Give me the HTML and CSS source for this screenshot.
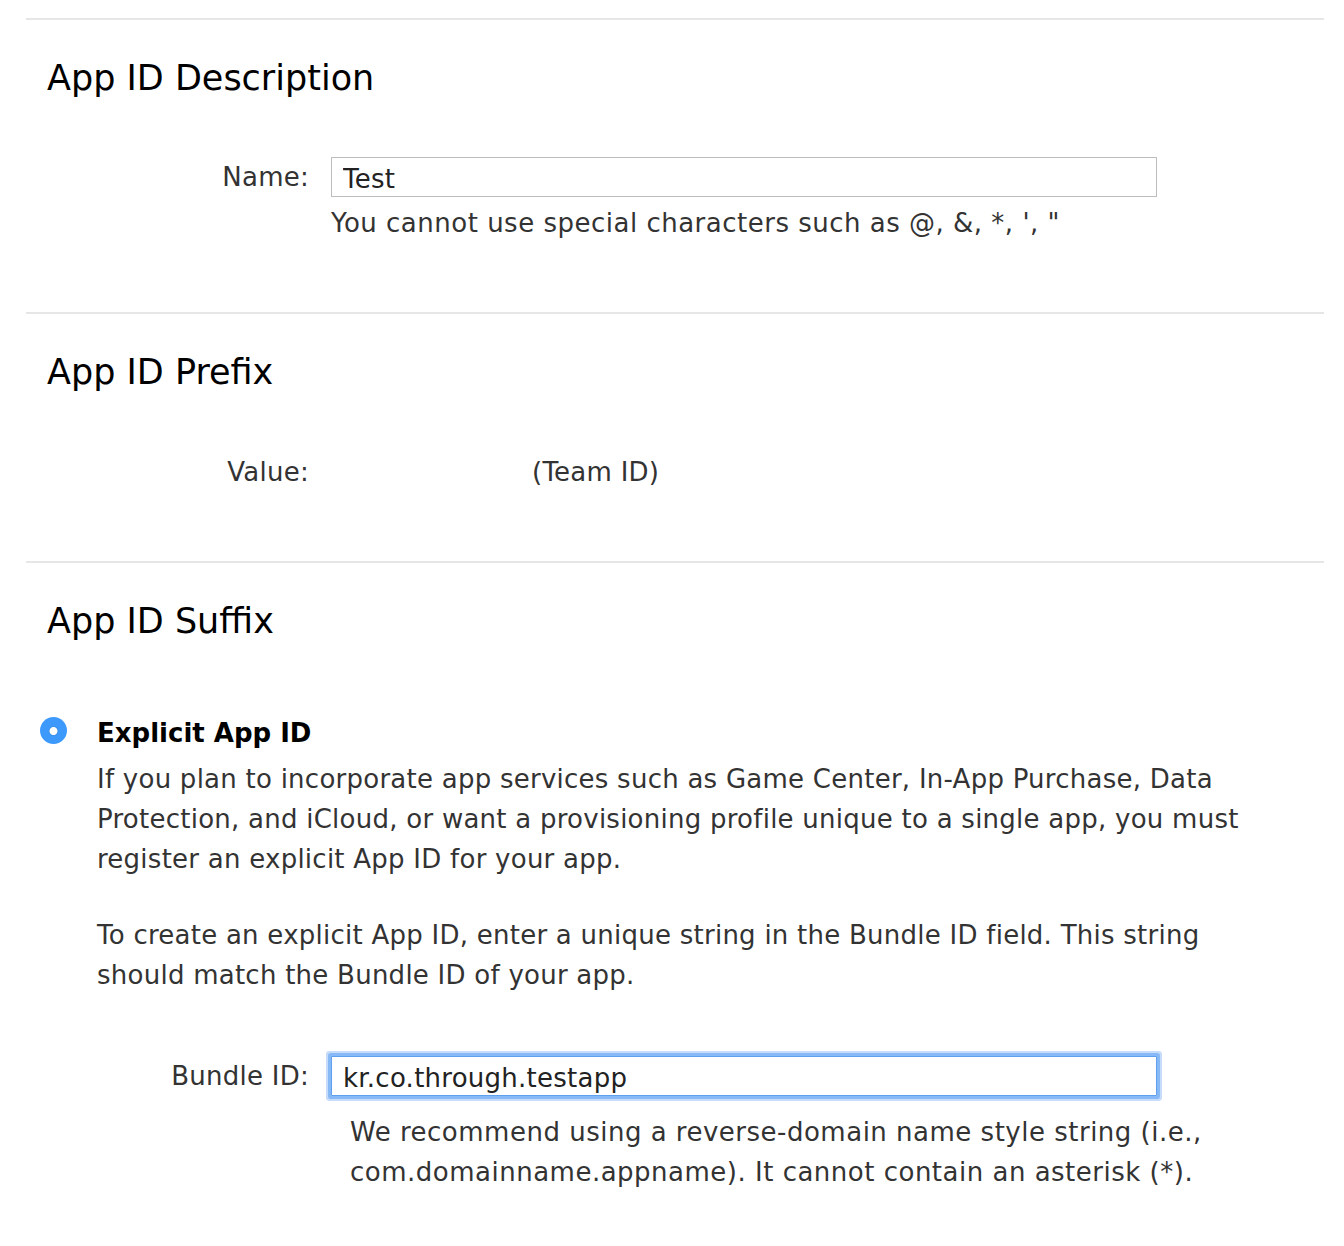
FILE: index.html
```html
<!DOCTYPE html>
<html lang="en">
<head>
<meta charset="utf-8">
<title>Register App ID</title>
<link rel="stylesheet" href="styles.css">
</head>
<body>
<div class="page">
  <section class="section">
    <h2 class="section-title">App ID Description</h2>
    <div class="field field--name">
      <label class="field-label" for="name">Name:</label>
      <div class="field-body">
        <input class="text-input" id="name" type="text" value="Test">
        <div class="field-hint">You cannot use special characters such as @, &amp;, *, ', "</div>
      </div>
    </div>
  </section>

  <section class="section">
    <h2 class="section-title">App ID Prefix</h2>
    <div class="field field--value">
      <div class="field-label">Value:</div>
      <div class="field-value">(Team ID)</div>
    </div>
  </section>

  <section class="section section--last">
    <h2 class="section-title">App ID Suffix</h2>
    <div class="option">
      <span class="radio" aria-hidden="true"></span>
      <div class="option-body">
        <div class="option-title">Explicit App ID</div>
        <p class="option-text">If you plan to incorporate app services such as Game Center, In-App Purchase, Data<br>Protection, and iCloud, or want a provisioning profile unique to a single app, you must<br>register an explicit App ID for your app.</p>
        <p class="option-text option-text--gap">To create an explicit App ID, enter a unique string in the Bundle ID field. This string<br>should match the Bundle ID of your app.</p>
        <div class="field field--bundle">
          <label class="field-label field-label--inner" for="bundle">Bundle ID:</label>
          <div class="field-body">
            <input class="text-input text-input--focus" id="bundle" type="text" value="kr.co.through.testapp">
            <div class="field-hint field-hint--bundle">We recommend using a reverse-domain name style string (i.e.,<br>com.domainname.appname). It cannot contain an asterisk (*).</div>
          </div>
        </div>
      </div>
    </div>
  </section>
</div>
</body>
</html>
```

FILE: styles.css
```css
html, body {
  margin: 0;
  padding: 0;
  background: #ffffff;
}

body {
  font-family: "DejaVu Sans", "Liberation Sans", sans-serif;
  font-size: 26px;
  line-height: 40px;
  color: #333333;
  letter-spacing: 0.25px;
}

.page {
  padding-top: 18px;
  padding-bottom: 40px;
}

.section {
  margin-left: 26px;
  width: 1298px;
  border-top: 2px solid #e6e6e6;
  padding-bottom: 69px;
}

.section--last {
  padding-bottom: 0;
}

.section-title {
  margin: 0;
  padding: 37px 0 0 21px;
  font-size: 35px;
  line-height: 42px;
  font-weight: normal;
  color: #000000;
  letter-spacing: 0;
}

.field {
  display: flex;
  align-items: flex-start;
}

.field--name {
  margin-top: 58px;
}

.field--value {
  margin-top: 59px;
}

.field--bundle {
  margin-top: 61px;
}

.field-label {
  flex: 0 0 283px;
  margin-right: 22px;
  text-align: right;
  white-space: nowrap;
}

.field-label--inner {
  flex-basis: 212px;
}

.field-body {
  width: 826px;
}

.field-value {
  padding-left: 201px;
  white-space: nowrap;
}

.text-input {
  display: block;
  box-sizing: border-box;
  width: 826px;
  height: 40px;
  margin: 0;
  padding: 3px 11px 0;
  border: 1px solid #bdbdbd;
  border-radius: 0;
  font-family: inherit;
  font-size: 26px;
  letter-spacing: 0.25px;
  color: #222222;
  background: #ffffff;
  outline: none;
}

.text-input--focus {
  border: 1px solid #5f9ff0;
  border-radius: 1px;
  box-shadow: 0 0 0 3px #86b9f6, 0 0 0 5px #c6dcfa;
}

.field-hint {
  margin-top: 6px;
  white-space: nowrap;
  letter-spacing: 0.5px;
}

.field-hint--bundle {
  margin-top: 16px;
  padding-left: 19px;
}

.option {
  display: grid;
  grid-template-columns: 71px auto;
  margin-top: 71px;
}

.radio {
  display: block;
  width: 27px;
  height: 27px;
  margin: 4px 0 0 14px;
  border-radius: 50%;
  background: radial-gradient(circle at 50% 52%, #ffffff 0, #ffffff 3.6px, #3a8fe8 4.4px, #3d9afc 5.6px, #3d9afc 100%);
}

.option-title {
  font-weight: bold;
  color: #000000;
  letter-spacing: 0;
}

.option-text {
  margin: 6px 0 0;
  white-space: nowrap;
}

.option-text--gap {
  margin-top: 36px;
}
```
